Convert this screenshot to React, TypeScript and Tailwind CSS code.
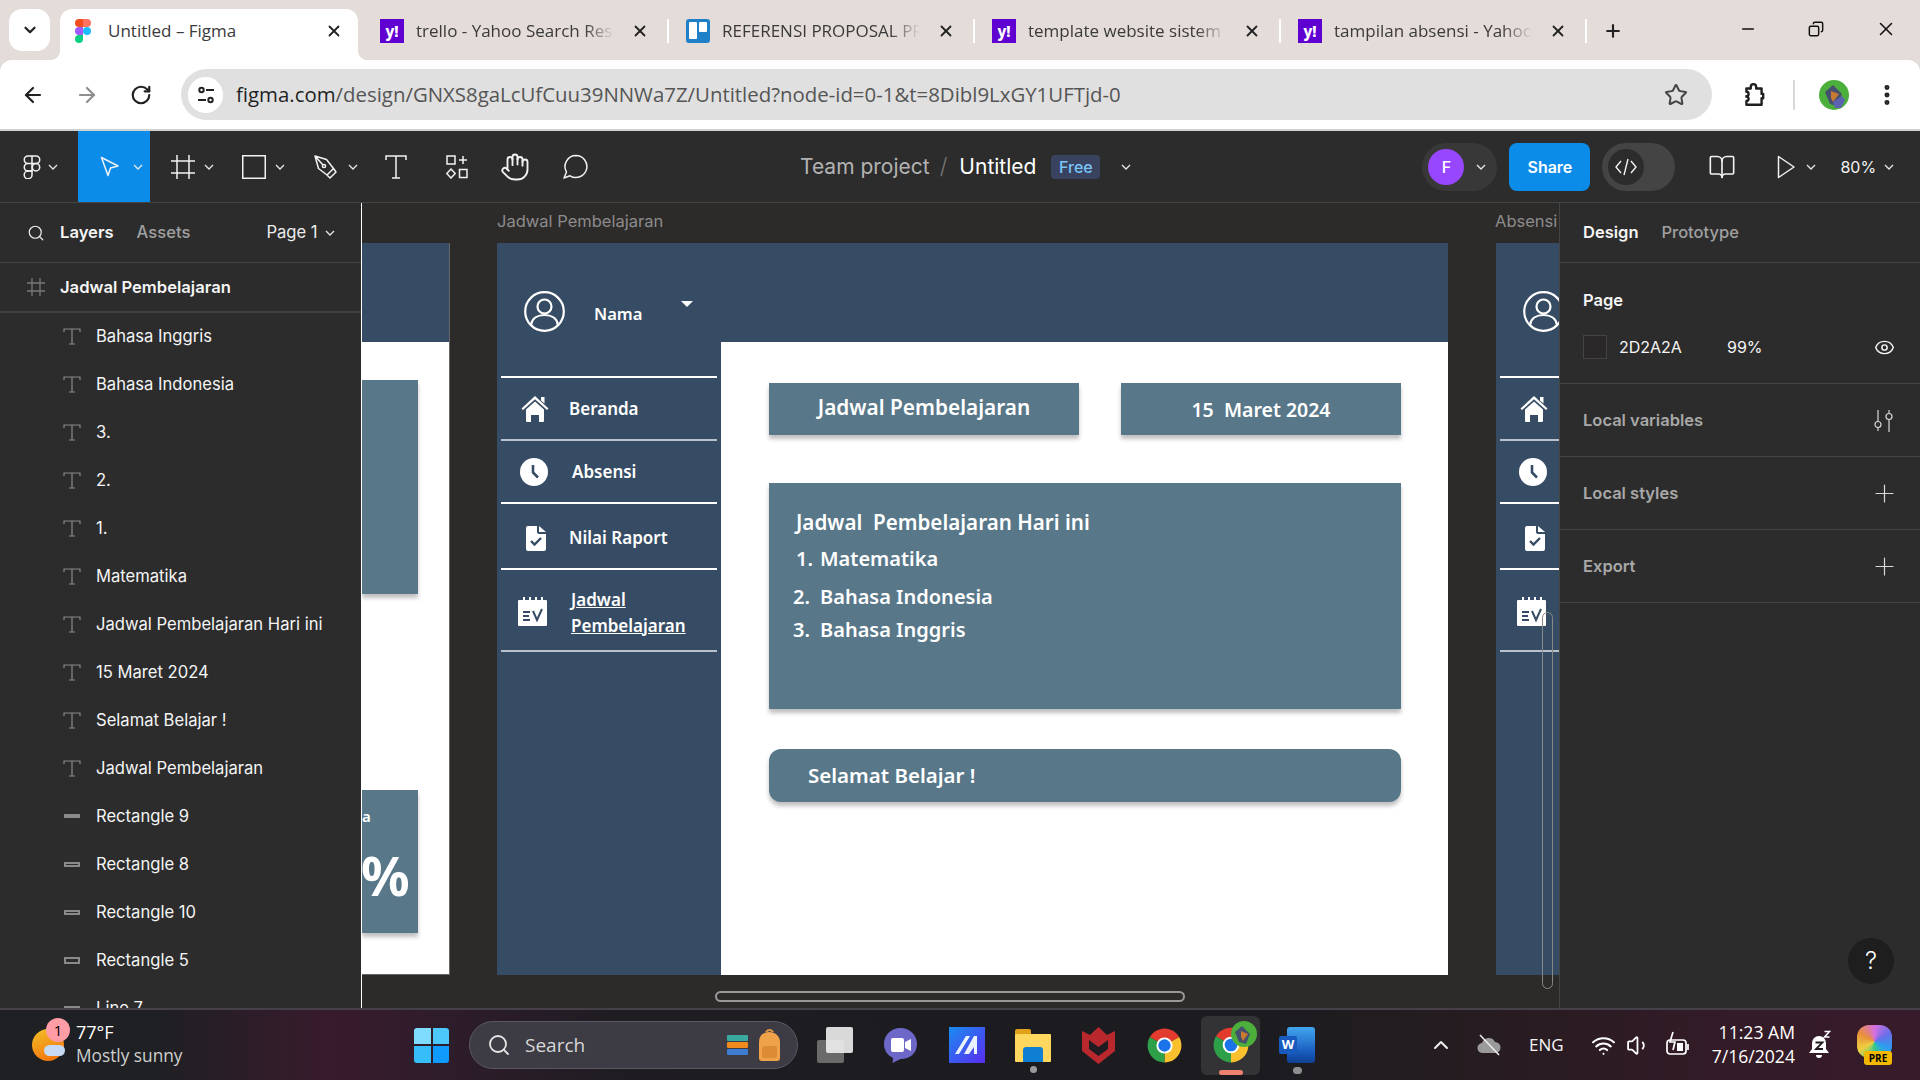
import React from "react";
import { ArrowLeft, ArrowRight, RotateCw, Star, MoreVertical, X, Plus, Minus, Search, ChevronDown, ChevronUp, Eye, BookOpen, Hand, Wifi, Volume1, Copy } from "lucide-react";

const figma = { fontFamily: "Inter, 'Liberation Sans', sans-serif" };
const chrome = { fontFamily: "'Open Sans', 'Liberation Sans', sans-serif" };
const design = { fontFamily: "'Noto Sans', 'Open Sans', sans-serif" };

function YahooIcon() {
  return (
    <div className="flex h-6 w-6 shrink-0 items-center justify-center bg-[#5f01d1] text-[15px] font-extrabold leading-none text-white" style={design}>y!</div>
  );
}
function TrelloIcon() {
  return (
    <div className="flex h-6 w-6 shrink-0 items-start gap-[2px] rounded-[3px] bg-[#1f80c8] p-[3px]">
      <div className="h-[17px] w-2 rounded-[1px] bg-white" />
      <div className="h-[10px] w-2 rounded-[1px] bg-white" />
    </div>
  );
}
function FigmaColor() {
  return (
    <svg width="16" height="24" viewBox="0 0 16 24" className="shrink-0">
      <path d="M8 0H4a4 4 0 0 0 0 8h4z" fill="#f24e1e" />
      <path d="M8 0h4a4 4 0 0 1 0 8H8z" fill="#ff7262" />
      <path d="M8 8H4a4 4 0 0 0 0 8h4z" fill="#a259ff" />
      <circle cx="12" cy="12" r="4" fill="#1abcfe" />
      <path d="M4 16h4v4a4 4 0 1 1-4-4z" fill="#0acf83" />
    </svg>
  );
}

function Tab({ icon, title }: { icon: React.ReactNode; title: string }) {
  return (
    <div className="relative mt-[9px] flex h-[44px] w-[304px] shrink-0 items-center pl-[17px]">
      <div className="mr-[12px]">{icon}</div>
      <div className="w-[198px] overflow-hidden whitespace-nowrap text-[17px] text-[#3a3a3a] [mask-image:linear-gradient(90deg,#000_85%,transparent)]" style={chrome}>{title}</div>
      <X size={18} strokeWidth={2.4} className="ml-[17px] text-[#222]" />
    </div>
  );
}
function Sep() {
  return <div className="mt-[19px] h-[24px] w-[2px] shrink-0 bg-white" />;
}

function TabStrip() {
  return (
    <div className="flex h-[60px] shrink-0 bg-[#e3dcd9]">
      <div className="ml-[9px] mt-[9px] flex h-[42px] w-[41px] items-center justify-center rounded-[13px] bg-white">
        <ChevronDown size={18} strokeWidth={3} className="text-[#222]" />
      </div>
      <div className="relative ml-[10px] mt-[9px] flex h-[51px] w-[298px] items-center rounded-t-[12px] bg-white pb-[7px] pl-[15px]">
        <div className="absolute -left-[10px] bottom-0 h-[10px] w-[10px] bg-[radial-gradient(circle_at_0_0,transparent_10px,white_10.5px)]" />
        <div className="absolute -right-[10px] bottom-0 h-[10px] w-[10px] bg-[radial-gradient(circle_at_100%_0,transparent_10px,white_10.5px)]" />
        <FigmaColor />
        <div className="ml-[17px] w-[217px] whitespace-nowrap text-[17px] text-[#3a3a3a]" style={chrome}>Untitled – Figma</div>
        <X size={18} strokeWidth={2.4} className="text-[#222]" />
      </div>
      <div className="ml-[5px] flex">
        <Tab icon={<YahooIcon />} title="trello - Yahoo Search Results" />
        <Sep />
        <Tab icon={<TrelloIcon />} title="REFERENSI PROPOSAL PRAKERIN" />
        <Sep />
        <Tab icon={<YahooIcon />} title="template website sistem informasi" />
        <Sep />
        <Tab icon={<YahooIcon />} title="tampilan absensi - Yahoo Search" />
        <Sep />
      </div>
      <div className="ml-[16px] mt-[9px] flex h-[44px] items-center">
        <Plus size={20} strokeWidth={2.6} className="text-[#222]" />
      </div>
      <div className="ml-[116px] flex h-[58px] items-center">
        <Minus size={18} strokeWidth={2.2} className="text-[#111]" />
      </div>
      <div className="ml-[51px] flex h-[58px] items-center">
        <Copy size={16} strokeWidth={2.2} className="-scale-x-100 text-[#111]" />
      </div>
      <div className="ml-[51px] flex h-[58px] items-center">
        <X size={22} strokeWidth={1.7} className="text-[#111]" />
      </div>
    </div>
  );
}

function AddressBar() {
  return (
    <div className="flex h-[71px] shrink-0 items-center rounded-t-[12px] border-b-2 border-[#d2d2d2] bg-white">
      <ArrowLeft size={24} strokeWidth={2.2} className="ml-[21px] text-[#222]" />
      <ArrowRight size={24} strokeWidth={2.2} className="ml-[30px] text-[#8e8e8e]" />
      <RotateCw size={22} strokeWidth={2.4} className="ml-[31px] text-[#222]" />
      <div className="ml-[29px] flex h-[51px] w-[1531px] items-center rounded-full bg-[#e0e0e0] pl-[7px]">
        <div className="flex h-[36px] w-[35px] items-center justify-center rounded-full bg-white">
          <svg width="20" height="20" viewBox="0 0 20 20" fill="none" stroke="#222" strokeWidth="2">
            <circle cx="5.5" cy="5" r="2.2" />
            <path d="M10 5h8" />
            <circle cx="14.5" cy="15" r="2.2" />
            <path d="M2 15h8" />
          </svg>
        </div>
        <div className="ml-[13px] w-[900px] whitespace-nowrap text-[20.4px] leading-none text-[#555]" style={chrome}>
          <span className="text-[#1f1f1f]">figma.com</span>/design/GNXS8gaLcUfCuu39NNWa7Z/Untitled?node-id=0-1&amp;t=8Dibl9LxGY1UFTjd-0
        </div>
        <Star size={24} strokeWidth={2} className="ml-[528px] text-[#444]" />
      </div>
      <svg width="26" height="26" viewBox="0 0 24 24" fill="none" stroke="#1f1f1f" strokeWidth="2.2" className="ml-[29px]">
        <path d="M5 6h4V4.5a2.5 2.5 0 0 1 5 0V6h5v5h1.5v4H19v6H5v-3.5a2 2 0 0 0 0-4V13a2 2 0 0 0 0-4z" strokeLinejoin="round" />
      </svg>
      <div className="ml-[26px] h-[30px] w-[2px] bg-[#d8d8d8]" />
      <svg width="30" height="30" viewBox="0 0 30 30" className="ml-[24px]">
        <circle cx="15" cy="15" r="15" fill="#4caf3c" />
        <path d="M6 12 14 5l9 9-5 12-7-2z" fill="#44506e" />
        <path d="M12 11l8 3-6 8-2-4z" fill="#c87a30" />
        <path d="M14 22l9-6 3 4-4 8h-6z" fill="#5c62b0" />
      </svg>
      <MoreVertical size={26} strokeWidth={2.6} className="ml-[25px] text-[#222]" />
    </div>
  );
}

function Chev({ className = "" }: { className?: string }) {
  return (
    <svg width="10" height="6" viewBox="0 0 10 6" fill="none" stroke="currentColor" strokeWidth="1.3" className={"shrink-0 text-[#e8e8e8] " + className}>
      <path d="M1 1l4 4 4-4" />
    </svg>
  );
}

function Toolbar() {
  const s = { stroke: "#f2f2f2", strokeWidth: 1.5, fill: "none" };
  return (
    <div className="flex h-[72px] shrink-0 items-center border-b border-[#444] bg-[#2c2c2c]" style={figma}>
      <svg width="18" height="24" viewBox="0 0 18 24" className="ml-[23px] shrink-0" {...s}>
        <path d="M9 1H5a3.6 3.6 0 0 0 0 7.5h4zM9 1h4a3.6 3.6 0 0 1 0 7.5H9zM9 8.5H5a3.6 3.6 0 0 0 0 7.5h4z" />
        <circle cx="13" cy="12.2" r="3.7" />
        <path d="M5 16h4v3.8A3.9 3.9 0 1 1 5 16z" />
      </svg>
      <Chev className="ml-[7px]" />
      <div className="ml-[20px] flex h-full w-[72px] shrink-0 items-center bg-[#0c8ce9] pl-[22px]">
        <svg width="20" height="21" viewBox="0 0 20 21" {...s}>
          <path d="M1.5 1.5 18 10l-7.5 2L8 19.5z" strokeLinejoin="round" />
        </svg>
        <Chev className="ml-[13px]" />
      </div>
      <svg width="24" height="24" viewBox="0 0 24 24" className="ml-[21px] shrink-0" {...s}>
        <path d="M6 0v24M18 0v24M0 6h24M0 18h24" />
      </svg>
      <Chev className="ml-[9px]" />
      <svg width="24" height="24" viewBox="0 0 24 24" className="ml-[28px] shrink-0" {...s}>
        <rect x="0.75" y="0.75" width="22.5" height="22.5" />
      </svg>
      <Chev className="ml-[9px]" />
      <svg width="25" height="25" viewBox="0 0 25 25" className="ml-[28px] shrink-0" {...s}>
        <path d="M2 2l11.5 3.5 7 9-6.5 6.5-8.5-6.5zM2 2l8 9M14 21l3 3 6-6-2.5-3.5" strokeLinejoin="round" />
        <circle cx="11" cy="12" r="1.6" />
      </svg>
      <Chev className="ml-[10px]" />
      <svg width="22" height="24" viewBox="0 0 22 24" className="ml-[27px] shrink-0" {...s}>
        <path d="M1 5V1h20v4M11 1v22M7 23h8" />
      </svg>
      <svg width="22" height="24" viewBox="0 0 22 24" className="ml-[39px] shrink-0" {...s}>
        <rect x="1" y="1" width="8" height="8" />
        <path d="M17 1v8M13 5h8M5 14l4.2 4.5L5 23 .8 18.500z" />
        <rect x="13.500" y="14.500" width="7.500" height="8" />
      </svg>
      <Hand size={30} strokeWidth={1.5} className="ml-[32px] shrink-0 text-[#f2f2f2]" />
      <svg width="26" height="26" viewBox="0 0 26 26" className="ml-[32px] shrink-0" {...s}>
        <path d="M14 1.500a11 11 0 1 1-6 20.300L2 24l2.500-6A11 11 0 0 1 14 1.500z" strokeLinejoin="round" />
      </svg>
      <div className="ml-[212px] whitespace-nowrap text-[21px] text-[#b3b3b3]">Team project</div>
      <div className="ml-[10px] text-[22px] font-light text-[#777]">/</div>
      <div className="ml-[12px] whitespace-nowrap text-[21px] text-white">Untitled</div>
      <div className="ml-[15px] flex h-[24px] w-[49px] items-center justify-center rounded-[4px] bg-[#394360] text-[16px] font-medium text-[#7cc4f8]">Free</div>
      <Chev className="ml-[21px]" />
      <div className="ml-[291px] flex h-[48px] w-[75px] shrink-0 items-center rounded-full bg-[#383838] pl-[6px]">
        <div className="flex h-[36px] w-[36px] items-center justify-center rounded-full bg-[#9747ff] text-[16px] font-medium text-white">F</div>
        <Chev className="ml-[12px]" />
      </div>
      <div className="ml-[12px] flex h-[48px] w-[81px] shrink-0 items-center justify-center rounded-[8px] bg-[#0c8ce9] text-[16px] font-semibold text-white">Share</div>
      <div className="ml-[12px] flex h-[48px] w-[73px] shrink-0 items-center rounded-full bg-[#444] pl-[6px]">
        <div className="flex h-[36px] w-[36px] items-center justify-center rounded-full bg-[#2c2c2c]">
          <svg width="24" height="18" viewBox="0 0 24 18" fill="none" stroke="#f2f2f2" strokeWidth="1.400">
            <path d="M7 3 2 9l5 6M17 3l5 6-5 6M14 1l-4 16" />
          </svg>
        </div>
      </div>
      <BookOpen size={28} strokeWidth={1.400} className="ml-[33px] shrink-0 text-[#f2f2f2]" />
      <svg width="18" height="24" viewBox="0 0 18 24" className="ml-[41px] shrink-0" {...s}>
        <path d="M1.500 1.500 17 12 1.500 22.500z" strokeLinejoin="round" />
      </svg>
      <Chev className="ml-[11px]" />
      <div className="ml-[24px] whitespace-nowrap text-[16px] text-[#f2f2f2]">80%</div>
      <Chev className="ml-[8px]" />
    </div>
  );
}

function TIcon() {
  return (
    <svg width="18" height="17" viewBox="0 0 18 17" fill="none" stroke="#8a8a8a" strokeWidth="1.200" className="shrink-0">
      <path d="M1 4V1h16v3M9 1v15M6 16h6" />
    </svg>
  );
}
function RectIcon({ h }: { h: number }) {
  return (
    <div className="flex w-[18px] shrink-0 justify-center">
      <div className="w-[16px] border-2 border-[#8a8a8a]" style={{ height: h }} />
    </div>
  );
}

const layers: [string, React.ReactNode][] = [
  ["Bahasa Inggris", <TIcon />],
  ["Bahasa Indonesia", <TIcon />],
  ["3.", <TIcon />],
  ["2.", <TIcon />],
  ["1.", <TIcon />],
  ["Matematika", <TIcon />],
  ["Jadwal Pembelajaran Hari ini", <TIcon />],
  ["15 Maret 2024", <TIcon />],
  ["Selamat Belajar !", <TIcon />],
  ["Jadwal Pembelajaran", <TIcon />],
  ["Rectangle 9", <RectIcon h={3} />],
  ["Rectangle 8", <RectIcon h={5} />],
  ["Rectangle 10", <RectIcon h={5} />],
  ["Rectangle 5", <RectIcon h={7} />],
  ["Line 7", <RectIcon h={2} />],
];

function LeftPanel() {
  return (
    <div className="flex w-[362px] shrink-0 flex-col overflow-hidden border-r border-white bg-[#2c2c2c]" style={figma}>
      <div className="flex h-[60px] shrink-0 items-center border-b border-[#444] pl-[27px]">
        <Search size={18} strokeWidth={1.600} className="text-[#eee]" />
        <div className="ml-[15px] text-[16.6px] font-semibold text-[#f5f5f5]">Layers</div>
        <div className="ml-[23px] text-[16.6px] font-medium text-[#a0a0a0]">Assets</div>
        <div className="ml-[76px] whitespace-nowrap text-[16.6px] text-[#ededed]">Page 1</div>
        <Chev className="ml-[7px] text-[#888]" />
      </div>
      <div className="mb-[-1px] flex h-[50px] shrink-0 items-center border-b-2 border-[#3e3e3e] pl-[27px]">
        <svg width="18" height="18" viewBox="0 0 18 18" fill="none" stroke="#777" strokeWidth="1.300">
          <path d="M5 0v18M13 0v18M0 5h18M0 13h18" />
        </svg>
        <div className="ml-[15px] whitespace-nowrap text-[16.6px] font-semibold text-[#f5f5f5]">Jadwal Pembelajaran</div>
      </div>
      {layers.map(([name, icon], i) => (
        <div key={i} className="flex h-[48px] shrink-0 items-center pl-[63px]">
          {icon}
          <div className="ml-[15px] whitespace-nowrap text-[16.6px] text-[#f5f5f5]">{name}</div>
        </div>
      ))}
    </div>
  );
}

function UserIcon() {
  return (
    <svg width="41" height="41" viewBox="0 0 41 41" fill="none" stroke="white" strokeWidth="2.200" className="shrink-0">
      <circle cx="20.500" cy="20.500" r="19.300" />
      <circle cx="20.500" cy="15.500" r="7" />
      <path d="M7 34c1-7 7-10 13.500-10S33 27 34 34" />
    </svg>
  );
}
function HomeIcon() {
  return (
    <svg width="28" height="26" viewBox="0 0 28 26" fill="white" className="shrink-0">
      <path d="M14 0 27.500 12.500l-1.500 1.500L14 3.200 2 14 .5 12.500z" />
      <path d="M20 1h3.500v6.500L20 4.500z" />
      <path d="M14 5.500 23 13.500V25a1 1 0 0 1-1 1h-4v-7h-8v7H6a1 1 0 0 1-1-1V13.500z" />
    </svg>
  );
}
function ClockIcon({ bg }: { bg: string }) {
  return (
    <svg width="28" height="28" viewBox="0 0 28 28" className="shrink-0">
      <circle cx="14" cy="14" r="14" fill="white" />
      <path d="M13 7v7.500l5 5" fill="none" stroke={bg} strokeWidth="2.600" />
    </svg>
  );
}
function DocIcon({ bg }: { bg: string }) {
  return (
    <svg width="20" height="25" viewBox="0 0 20 25" className="shrink-0">
      <path d="M2 0h9v6a2 2 0 0 0 2 2h7v15a2 2 0 0 1-2 2H2a2 2 0 0 1-2-2V2a2 2 0 0 1 2-2z" fill="white" />
      <path d="M13 0l7 6h-7z" fill="white" />
      <path d="M5 15l3.500 3.500L15 12" fill="none" stroke={bg} strokeWidth="2.400" />
    </svg>
  );
}
function CalIcon({ bg }: { bg: string }) {
  return (
    <svg width="29" height="29" viewBox="0 0 29 29" className="shrink-0">
      <rect x="0" y="3" width="29" height="26" rx="1" fill="white" />
      <path d="M6 0v5M12 0v5M18 0v5M24 0v5" stroke="white" strokeWidth="2" />
      <path d="M5 15h7M5 19h6M5 23h7" stroke={bg} strokeWidth="2" />
      <path d="M15 14l4 9 5-11" fill="none" stroke={bg} strokeWidth="2" />
    </svg>
  );
}

const frameBg = "#364c64";

function NavLine({ grey }: { grey?: boolean }) {
  return <div className={grey ? "ml-[4px] h-[2px] w-[216px] bg-[#b9c2cc]" : "ml-[4px] h-[2px] w-[216px] bg-white"} />;
}

function Sidebar() {
  const label = "whitespace-nowrap text-[17px] font-semibold text-white";
  return (
    <div className="w-[224px] shrink-0" style={design}>
      <div className="relative flex h-[133px] items-start pl-[27px] pt-[48px]">
        <UserIcon />
        <div className="ml-[29px] mt-[11px] text-[16.6px] font-semibold text-white">Nama</div>
        <div className="absolute left-[184px] top-[58px] h-0 w-0 border-x-[6px] border-t-[6px] border-x-transparent border-t-white" />
      </div>
      <NavLine />
      <div className="flex h-[61px] items-center pl-[24px]">
        <HomeIcon />
        <div className={"ml-[20px] " + label}>Beranda</div>
      </div>
      <NavLine grey />
      <div className="flex h-[61px] items-center pl-[23px] pt-[1px]">
        <ClockIcon bg={frameBg} />
        <div className={"ml-[24px] " + label}>Absensi</div>
      </div>
      <NavLine />
      <div className="flex h-[64px] items-center pl-[29px] pt-[4px]">
        <DocIcon bg={frameBg} />
        <div className={"ml-[23px] " + label}>Nilai Raport</div>
      </div>
      <NavLine />
      <div className="flex h-[80px] items-center pl-[21px] pt-[2px]">
        <CalIcon bg={frameBg} />
        <div className={"ml-[24px] pt-[3px] text-[17px] font-semibold leading-[26px] text-white underline"}>Jadwal<br />Pembelajaran</div>
      </div>
      <NavLine grey />
    </div>
  );
}

const card = "bg-[#587789] shadow-[0_4px_4px_rgba(0,0,0,0.25)]";

function MainFrame() {
  const t = "font-semibold text-white";
  return (
    <div className="absolute left-[135px] top-[40px] flex h-[732px] w-[951px] bg-[#364c64]" style={design}>
      <Sidebar />
      <div className="flex-1 pt-[99px]">
        <div className="h-full bg-white pl-[48px] pr-[47px] pt-[41px]">
          <div className="flex gap-[42px]">
            <div className={"flex h-[52px] w-[310px] items-center justify-center pb-[3px] text-[20.8px] " + card + " " + t}>Jadwal Pembelajaran</div>
            <div className={"flex h-[52px] w-[280px] items-center justify-center pt-[1px] text-[19.5px] " + card + " " + t}>15&nbsp; Maret 2024</div>
          </div>
          <div className={"mt-[48px] h-[226px] pl-[24px] pt-[22px] text-[20px] " + card + " " + t}>
            <div className="ml-[3px] whitespace-nowrap text-[20.6px] leading-[34px]">Jadwal&nbsp; Pembelajaran Hari ini</div>
            <div className="mt-[3px] flex h-[34px] items-center"><span className="w-[27px] pl-[3px]">1.</span>Matematika</div>
            <div className="mt-[4px] flex h-[34px] items-center"><span className="w-[27px]">2.</span>Bahasa Indonesia</div>
            <div className="flex h-[31px] items-center"><span className="w-[27px]">3.</span>Bahasa Inggris</div>
          </div>
          <div className={"mt-[40px] flex h-[53px] items-center rounded-[12px] pl-[39px] text-[20.5px] " + card + " " + t}>Selamat Belajar !</div>
        </div>
      </div>
    </div>
  );
}

function LeftFrame() {
  return (
    <div className="absolute left-0 top-[40px] h-[732px] w-[88px] border-b border-r border-[#666] bg-[#364c64]" style={design}>
      <div className="mt-[99px] h-[632px] bg-white pt-[38px]">
        <div className={"h-[214px] w-[56px] " + card} />
        <div className={"relative mt-[196px] h-[143px] w-[56px] overflow-hidden " + card}>
          <div className="absolute left-0 top-[15px] text-[15px] font-semibold text-white">a</div>
          <div className="absolute left-[-1px] top-[55px] text-[54px] font-bold leading-[60px] text-white">%</div>
        </div>
      </div>
    </div>
  );
}

function RightFrame() {
  return (
    <div className="absolute left-[1134px] top-[40px] h-[732px] w-[224px] bg-[#364c64]">
      <Sidebar />
    </div>
  );
}

function Canvas() {
  return (
    <div className="relative w-[1197px] shrink-0 overflow-hidden bg-[#2d2a2a]" style={figma}>
      <LeftFrame />
      <div className="absolute left-[135px] top-[6px] whitespace-nowrap text-[16.5px] text-[#8c8c8c]">Jadwal Pembelajaran</div>
      <div className="absolute left-[1133px] top-[6px] whitespace-nowrap text-[16.5px] text-[#8c8c8c]">Absensi</div>
      <MainFrame />
      <RightFrame />
      <div className="absolute left-[1180px] top-[409px] h-[377px] w-[11px] rounded-full border border-[#888]" />
      <div className="absolute left-[353px] top-[788px] h-[11px] w-[470px] rounded-full border-2 border-[#999]" />
    </div>
  );
}

function Section({ title, icon }: { title: string; icon: React.ReactNode }) {
  return (
    <div className="flex h-[73px] items-center justify-between border-b border-[#444] pl-[23px] pr-[21px] pt-[1px]">
      <div className="text-[16.5px] font-semibold text-[#a8a8a8]">{title}</div>
      {icon}
    </div>
  );
}

function RightPanel() {
  const plus = <Plus size={29} strokeWidth={1} className="text-[#d8d8d8]" />;
  return (
    <div className="relative flex-1 border-l border-[#444] bg-[#2c2c2c]" style={figma}>
      <div className="flex h-[60px] items-center border-b border-[#444] pl-[23px]">
        <div className="text-[16.5px] font-semibold text-[#f5f5f5]">Design</div>
        <div className="ml-[23px] text-[16.5px] font-medium text-[#a0a0a0]">Prototype</div>
      </div>
      <div className="h-[121px] border-b border-[#444] pl-[23px] pr-[25px] pt-[26px]">
        <div className="text-[16.5px] font-semibold leading-[22px] text-[#f5f5f5]">Page</div>
        <div className="mt-[24px] flex h-[24px] items-center">
          <div className="h-[24px] w-[24px] border border-[#444] bg-[#2a2828]" />
          <div className="ml-[12px] w-[108px] text-[16px] text-[#f5f5f5]">2D2A2A</div>
          <div className="text-[16px] text-[#f5f5f5]">99%</div>
          <Eye size={21} strokeWidth={1.700} className="ml-auto text-[#f5f5f5]" />
        </div>
      </div>
      <Section
        title="Local variables"
        icon={
          <svg width="20" height="22" viewBox="0 0 20 22" fill="none" stroke="#d8d8d8" strokeWidth="1.200" className="mr-[5px]">
            <path d="M4 0v11M4 18v3M15 0v3M15 10v12" />
            <circle cx="4" cy="14.500" r="3" />
            <circle cx="15" cy="6.500" r="3" />
          </svg>
        }
      />
      <Section title="Local styles" icon={plus} />
      <Section title="Export" icon={plus} />
      <div className="absolute left-[288px] top-[735px] flex h-[46px] w-[46px] items-center justify-center rounded-full bg-[#1e1e1e] text-[24px] font-light text-white">?</div>
    </div>
  );
}

function ChromeLogo({ size = 37 }: { size?: number }) {
  return (
    <svg width={size} height={size} viewBox="0 0 48 48" className="shrink-0">
      <path d="M24 24 5 13A22 22 0 0 1 43 13z" fill="#e33b2e" />
      <path d="M24 24 43 13A22 22 0 0 1 24 46z" fill="#fbc02d" />
      <path d="M24 24 24 46A22 22 0 0 1 5 13z" fill="#2fa04a" />
      <circle cx="24" cy="24" r="10.500" fill="white" />
      <circle cx="24" cy="24" r="8" fill="#1a73e8" />
    </svg>
  );
}

function Taskbar() {
  return (
    <div className="flex h-[72px] shrink-0 items-center border-t-2 border-[#45404a] bg-[linear-gradient(90deg,#1e2023_0%,#1e2023_8%,#381b2c_17%,#301c2b_22%,#1f1d22_32%,#1c1c20_50%,#1c1c20_66%,#241c20_75%,#331b27_90%,#371b2b_100%)]" style={chrome}>
      <div className="flex w-[414px] shrink-0 items-center pl-[32px]">
        <div className="relative h-[32px] w-[32px] shrink-0 rounded-full bg-[linear-gradient(160deg,#f2c029,#f36c08)]">
          <div className="absolute left-[14px] top-[-11px] flex h-[24px] w-[24px] items-center justify-center rounded-full bg-[#ff9da7] text-[15px] text-black">1</div>
          <div className="absolute left-[12px] top-[16px] h-[11px] w-[21px] rounded-full bg-[#c7daf5]" />
        </div>
        <div className="ml-[12px] -mt-[3px] whitespace-nowrap">
          <div className="text-[18px] leading-[24px] text-white">77°F</div>
          <div className="text-[17.3px] leading-[24px] text-[#cfcfcf]">Mostly sunny</div>
        </div>
      </div>
      <div className="grid h-[35px] w-[35px] shrink-0 grid-cols-2 gap-[2px]">
        <div className="rounded-tl-[3px] bg-[#7fdcff]" />
        <div className="rounded-tr-[3px] bg-[#4cc8fb]" />
        <div className="rounded-bl-[3px] bg-[#35befa]" />
        <div className="rounded-br-[3px] bg-[#0f9bfb]" />
      </div>
      <div className="ml-[20px] flex h-[48px] w-[329px] shrink-0 items-center rounded-full border border-[#5a5862] bg-[#3d3b44] pl-[17px]">
        <Search size={24} strokeWidth={1.800} className="text-[#e6e6e6]" />
        <div className="ml-[14px] text-[19px] text-[#d8d8d8]">Search</div>
        <svg width="23" height="24" viewBox="0 0 23 24" className="ml-[141px] shrink-0">
          <rect x="1" y="2" width="21" height="6" rx="1" fill="#3aa9a0" />
          <rect x="1" y="9" width="21" height="6" rx="1" fill="#ef8a1d" />
          <rect x="1" y="16" width="21" height="6" rx="1" fill="#3e7ed0" />
        </svg>
        <svg width="25" height="34" viewBox="0 0 25 34" className="ml-[8px] shrink-0">
          <path d="M9 4a4 4 0 0 1 7 0" fill="none" stroke="#e39a45" strokeWidth="2" />
          <path d="M2 14c0-6 4-10 10-10s11 4 11 10v16a3 3 0 0 1-3 3H5a3 3 0 0 1-3-3z" fill="#f0a24b" />
          <rect x="5" y="18" width="15" height="12" rx="2" fill="#dd8b34" />
        </svg>
      </div>
      <div className="relative ml-[19px] h-[36px] w-[36px] shrink-0">
        <div className="absolute left-0 top-[13px] h-[23px] w-[27px] rounded-[2px] bg-[#6a6a6a]" />
        <div className="absolute left-[9px] top-0 h-[26px] w-[27px] rounded-[2px] bg-[#eeeeee]/90" />
      </div>
      <svg width="33" height="36" viewBox="0 0 33 36" className="ml-[31px] shrink-0">
        <path d="M16.500 1C26 1 33 8 33 17s-7 15-16.500 15l-8 4 .5-5C3 28 0 23 0 17 0 8 7 1 16.500 1z" fill="#6d68c8" />
        <rect x="7" y="11" width="13" height="14" rx="2" fill="white" />
        <path d="M21 15l6-3v12l-6-3z" fill="white" />
      </svg>
      <div className="relative ml-[32px] h-[36px] w-[36px] shrink-0 overflow-hidden bg-[linear-gradient(135deg,#1a8cf0,#5a2cf0)]">
        <svg width="36" height="36" viewBox="0 0 36 36">
          <path d="M6 27 17 9h4L10 27zM15 27 25 9h3v18h-3v-7l-5 7z" fill="#eaf2ff" />
        </svg>
      </div>
      <div className="relative ml-[30px] h-[33px] w-[36px] shrink-0">
        <div className="absolute left-0 top-0 h-[10px] w-[16px] rounded-t-[2px] bg-[#e0a21a]" />
        <div className="absolute bottom-0 left-0 top-[5px] w-[36px] rounded-[1px] bg-[#ffd75e]" />
        <div className="absolute bottom-0 left-[8px] h-[15px] w-[20px] rounded-t-[3px] bg-[#0f7fd4]" />
        <div className="absolute -bottom-[11px] left-[15px] h-[7px] w-[7px] rounded-full bg-[#9a9a9a]" />
      </div>
      <svg width="33" height="37" viewBox="0 0 33 37" className="ml-[31px] shrink-0">
        <path d="M0 4l8 4 8.500-8L25 8l8-4v20L16.500 37 0 24z" fill="#b9282c" />
        <path d="M7 13l9.500 7L26 13v9l-9.500 7L7 22z" fill="#1f1d22" />
      </svg>
      <div className="ml-[31px]">
        <ChromeLogo />
      </div>
      <div className="relative ml-[18px] flex h-[59px] w-[59px] shrink-0 items-center justify-center rounded-[6px] bg-white/10">
        <ChromeLogo size={38} />
        <svg width="26" height="26" viewBox="0 0 26 26" className="absolute left-[30px] top-[5px]">
          <circle cx="13" cy="13" r="13" fill="#4caf3c" />
          <path d="M4 11 11 5l8 8-4 10-7-2z" fill="#44506e" />
          <path d="M10 10l7 3-5 7-2-4z" fill="#c87a30" />
        </svg>
        <div className="absolute bottom-0 left-[18px] h-[5px] w-[24px] rounded-full bg-[#f08070]" />
      </div>
      <div className="relative ml-[19px] h-[36px] w-[36px] shrink-0">
        <div className="absolute left-[8px] top-0 h-[36px] w-[28px] rounded-[3px] bg-[linear-gradient(180deg,#41a5ee_0%,#2b7cd3_40%,#185abd_70%,#103f91_100%)]" />
        <div className="absolute left-0 top-[9px] flex h-[18px] w-[18px] items-center justify-center rounded-[2px] bg-[#185abd] text-[13px] font-bold text-white">W</div>
        <div className="absolute -bottom-[11px] left-[14px] h-[7px] w-[9px] rounded-full bg-[#8e8e8e]" />
      </div>
      <ChevronUp size={24} strokeWidth={2} className="ml-[114px] shrink-0 text-[#f0f0f0]" />
      <svg width="24" height="22" viewBox="0 0 24 22" className="ml-[24px] shrink-0">
        <path d="M6 19a5 5 0 0 1-1-10 7 7 0 0 1 13-1 5.500 5.500 0 0 1 0 11z" fill="#9a9a9a" />
        <path d="M3 1l19 20" stroke="#eee" strokeWidth="1.500" />
      </svg>
      <div className="ml-[28px] w-[34px] text-[17px] text-[#f5f5f5]">ENG</div>
      <Wifi size={25} strokeWidth={2} className="ml-[28px] shrink-0 text-white" />
      <Volume1 size={25} strokeWidth={1.700} className="ml-[10px] shrink-0 text-white" />
      <svg width="24" height="28" viewBox="0 0 24 28" fill="none" stroke="white" strokeWidth="1.700" className="ml-[14px] shrink-0">
        <rect x="2" y="9" width="19" height="14" rx="3" />
        <path d="M23 13v6" />
        <path d="M8 1 5 11h5l-2 8" />
        <rect x="12" y="12" width="6" height="8" fill="white" stroke="none" />
      </svg>
      <div className="ml-[6px] w-[100px] shrink-0 -translate-y-[1px] whitespace-nowrap text-right text-[17.6px] leading-[24px] text-white">
        <div>11:23 AM</div>
        <div>7/16/2024</div>
      </div>
      <svg width="22" height="30" viewBox="0 0 22 30" className="ml-[14px] shrink-0" fill="none">
        <path d="M10 6a7 7 0 0 0-7 7v6l-3 4h20l-3-4v-6a7 7 0 0 0-7-7zM7 25h6a3 3 0 0 1-6 0z" fill="white" />
        <path d="M6.500 12.500h7L7 19h7" stroke="#241c20" strokeWidth="1.800" />
        <path d="M15.500 1.500h5l-5 5.500h5" stroke="white" strokeWidth="1.500" />
      </svg>
      <div className="relative ml-[26px] h-[40px] w-[35px] shrink-0">
        <div className="absolute left-0 top-0 h-[33px] w-[35px] rounded-[12px] bg-[conic-gradient(#d76fe0,#6a6ee8,#2aa0f0,#35c98a,#f0d040,#e8903a,#d76fe0)]" />
        <div className="absolute bottom-0 left-[7px] flex h-[14px] w-[28px] items-center justify-center rounded-[3px] bg-[#f5b800] text-[10px] font-bold text-black">PRE</div>
      </div>
    </div>
  );
}

export default function App() {
  return (
    <div className="flex h-[1080px] w-[1920px] flex-col overflow-hidden bg-[#e3dcd9]">
      <TabStrip />
      <AddressBar />
      <Toolbar />
      <div className="flex h-[805px] shrink-0 overflow-hidden">
        <LeftPanel />
        <Canvas />
        <RightPanel />
      </div>
      <Taskbar />
    </div>
  );
}
